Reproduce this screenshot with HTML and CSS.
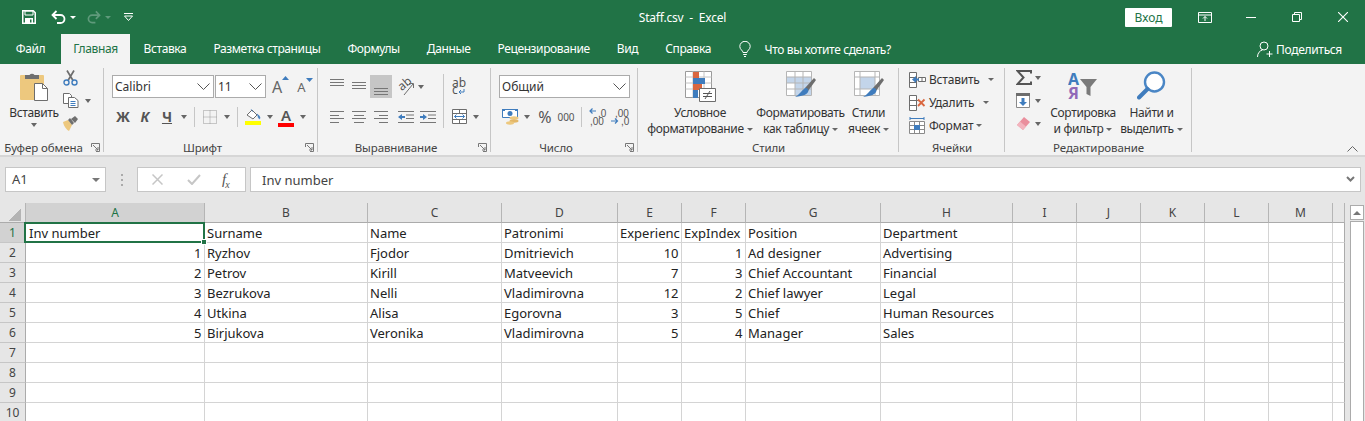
FILE: index.html
```html
<!DOCTYPE html>
<html lang="ru">
<head>
    <meta charset="UTF-8">
    <meta name="viewport" content="width=device-width, initial-scale=1.0">
    <title>Staff.csv - Excel</title>
    <link rel="stylesheet" href="styles.css">
</head>
<body>
    <header class="titlebar">
        <div class="quick">
            <svg class="q-save" width="14" height="14" viewBox="0 0 14 14"><path d="M.75.75h10.5l2 2v10.5H.75z" fill="none" stroke="#fff" stroke-width="1.5"/><path d="M3 1h8v4H3z" fill="none" stroke="#fff"/><path d="M3 8h8v6H3z" fill="#fff"/><path d="M8 9.500h1.500v3H8z" fill="#217346"/></svg>
            <svg class="q-undo" width="15" height="14" viewBox="0 0 15 14"><path d="M5.500 1L1.500 5l4 4M1.500 5H9.500a3.900 3.900 0 0 1 0 8H6" fill="none" stroke="#fff" stroke-width="1.800"/></svg>
            <span class="q-arrow"></span>
            <svg class="q-redo" width="14" height="14" viewBox="0 0 15 14"><path d="M9.500 1l4 4-4 4M13.500 5H5.500a3.900 3.900 0 0 0 0 8H9" fill="none" stroke="#5f9a7b" stroke-width="1.800"/></svg>
            <span class="q-arrow dim"></span>
            <svg class="q-custom" width="9" height="8" viewBox="0 0 9 8"><path d="M0 .5h9" stroke="#fff"/><path d="M.5 3h8L4.500 7.500z" fill="none" stroke="#fff"/></svg>
        </div>
        <div class="doc-title">Staff.csv &nbsp;-&nbsp; Excel</div>
        <div class="win">
            <button class="login">Вход</button>
            <span class="win-btn"><svg width="14" height="11" viewBox="0 0 14 11"><path d="M.5.500h13v10H.5zM.5 3h13" fill="none" stroke="#fff"/><path d="M7 9V4.500M5 6.500l2-2 2 2" fill="none" stroke="#fff"/></svg></span>
            <span class="win-btn"><svg width="10" height="1" viewBox="0 0 10 1"><path d="M0 .5h10" stroke="#fff"/></svg></span>
            <span class="win-btn"><svg width="10" height="10" viewBox="0 0 10 10"><path d="M.5 2.500h7v7h-7zM2.500 2.500v-2h7v7h-2" fill="none" stroke="#fff"/></svg></span>
            <span class="win-btn"><svg width="10" height="10" viewBox="0 0 10 10"><path d="M0 0l10 10M10 0L0 10" stroke="#fff" stroke-width="1.100"/></svg></span>
        </div>
    </header>

    <nav class="tabs">
        <span class="tab file">Файл</span>
        <span class="tab active">Главная</span>
        <span class="tab">Вставка</span>
        <span class="tab">Разметка страницы</span>
        <span class="tab">Формулы</span>
        <span class="tab">Данные</span>
        <span class="tab">Рецензирование</span>
        <span class="tab">Вид</span>
        <span class="tab">Справка</span>
        <span class="tell">
            <svg width="12" height="16" viewBox="0 0 12 16"><path d="M4 11.500C4 9.500 .8 8.500.8 5.500a5.200 5.200 0 0 1 10.400 0C11.200 8.500 8 9.500 8 11.500zM4.200 13.500h3.600M5 15.500h2" fill="none" stroke="#fff"/></svg>
            Что вы хотите сделать?
        </span>
        <span class="share">
            <svg width="16" height="17" viewBox="0 0 16 17"><circle cx="7" cy="5" r="4" fill="none" stroke="#fff"/><path d="M.5 16c0-4 2.500-6.500 5-7M12.500 10v6M9.500 13h6" fill="none" stroke="#fff"/></svg>
            Поделиться
        </span>
    </nav>

    <section class="ribbon">
        <div class="group g-clip">
            <div class="body">
                <div class="big b-paste">
                    <div class="big-icon">
                        <svg width="28" height="30" viewBox="0 0 28 30"><rect y="4" width="24" height="25" rx="1" fill="#edc87e"/><path d="M5 8V4h4.500a3 3 0 0 1 5 0H19v4z" fill="#6f6f6f"/><path d="M14.500 12.500h8l5 5v12h-13z" fill="#fff" stroke="#6d6d6d"/><path d="M22.500 12.500v5h5" fill="none" stroke="#6d6d6d"/></svg>
                    </div>
                    <span>Вставить</span>
                    <span class="arrow"></span>
                </div>
                <div class="stack up">
                    <div class="row-s">
                        <svg width="15" height="16" viewBox="0 0 15 16"><path d="M4 .500l6 10M11 .500l-6 10" stroke="#6d6d6d" stroke-width="1.700"/><circle cx="3.500" cy="12.500" r="2.500" fill="none" stroke="#3f7cbd" stroke-width="1.400"/><circle cx="11.500" cy="12.500" r="2.500" fill="none" stroke="#3f7cbd" stroke-width="1.400"/></svg>
                    </div>
                    <div class="row-s">
                        <svg width="16" height="15" viewBox="0 0 16 15"><path d="M.5.500h6l2 2v8h-8z" fill="#fff" stroke="#6d6d6d"/><path d="M5.500 4.500h6l3.500 3v7H5.500z" fill="#fff" stroke="#6d6d6d"/><path d="M7.500 8.500h5M7.500 10.500h5M7.500 12.500h5" stroke="#3f7cbd"/></svg>
                        <span class="arrow a-copy"></span>
                    </div>
                    <div class="row-s">
                        <svg width="16" height="15" viewBox="0 0 16 15"><path d="M0 6l5-2 4 5-3 6C4 14 1 11 0 6z" fill="#edc87e"/><path d="M5 4l4 5 2-2-4-5zM8 3l4-3 3 3-3 4z" fill="#6f6f6f"/></svg>
                    </div>
                </div>
            </div>
            <div class="label">Буфер обмена</div>
            <svg class="launcher" width="9" height="9" viewBox="0 0 9 9"><path d="M.5 4V.5h8V8.500H5M2 2l5 5M7 4v3H4" fill="none" stroke="#777"/></svg>
        </div>

        <div class="group g-font">
            <div class="body rows">
                <div class="row">
                    <div class="select s-font">Calibri<svg width="13" height="7" viewBox="0 0 13 7"><path d="M.5.500l6 6 6-6" fill="none" stroke="#555"/></svg></div>
                    <div class="select s-size">11<svg width="13" height="7" viewBox="0 0 13 7"><path d="M.5.500l6 6 6-6" fill="none" stroke="#555"/></svg></div>
                    <span class="grow">A<svg width="7" height="4" viewBox="0 0 7 4"><path d="M0 4l3.500-4L7 4z" fill="#3f7cbd"/></svg></span>
                    <span class="grow small">A<svg width="7" height="4" viewBox="0 0 7 4"><path d="M0 0l3.500 4L7 0z" fill="#3f7cbd"/></svg></span>
                </div>
                <div class="row">
                    <span class="tool t-b">Ж</span>
                    <span class="tool t-i">К</span>
                    <span class="tool t-u">Ч</span>
                    <span class="arrow"></span>
                    <span class="sep"></span>
                    <span class="tool"><svg width="14" height="14" viewBox="0 0 14 14"><path d="M.5.500h13v13H.5zM7 .5v13M.5 7h13" fill="none" stroke="#999" stroke-dasharray="1 1"/></svg></span>
                    <span class="arrow"></span>
                    <span class="sep"></span>
                    <span class="tool"><svg width="16" height="17" viewBox="0 0 16 17"><path d="M2 7l5-5 5 5-4 4z" fill="#fff" stroke="#6d6d6d"/><path d="M6 1l2 3M12 6c2 1 3 3 3 4s-1 1-1.500 0-.5-3-1.500-4z" fill="#3f7cbd" stroke="#3f7cbd" stroke-width=".6"/><rect y="13" width="16" height="4" fill="#ffff00"/></svg></span>
                    <span class="arrow"></span>
                    <span class="tool t-color">A</span>
                    <span class="arrow"></span>
                </div>
            </div>
            <div class="label">Шрифт</div>
            <svg class="launcher" width="9" height="9" viewBox="0 0 9 9"><path d="M.5 4V.5h8V8.500H5M2 2l5 5M7 4v3H4" fill="none" stroke="#777"/></svg>
        </div>

        <div class="group g-align">
            <div class="body align-body">
                <div class="rows align-left">
                    <div class="row">
                        <span class="tool"><svg width="14" height="23" viewBox="0 0 14 23"><path d="M0 4.500h14M0 7.500h14M0 10.500h14" stroke="#767676"/></svg></span>
                        <span class="tool"><svg width="14" height="23" viewBox="0 0 14 23"><path d="M0 7.500h14M0 10.500h14M0 13.500h14" stroke="#767676"/></svg></span>
                        <span class="tool on"><svg width="14" height="23" viewBox="0 0 14 23"><path d="M0 13.500h14M0 16.500h14M0 19.500h14" stroke="#767676"/></svg></span>
                        <span class="tool t-orient"><svg class="wide" width="25" height="25" viewBox="-2 -2 25 25"><text x="2" y="13" transform="rotate(-40 7 9)" class="svg-t">ab</text><path d="M8 19L17 8M13 7.500h4.500V12" fill="none" stroke="#6d6d6d"/></svg></span>
                        <span class="arrow a-tight"></span>
                    </div>
                    <div class="row">
                        <span class="tool"><svg width="14" height="14" viewBox="0 0 14 14"><path d="M0 1.500h14M0 5.500h9M0 8.500h14M0 12.500h9" stroke="#767676"/></svg></span>
                        <span class="tool"><svg width="14" height="14" viewBox="0 0 14 14"><path d="M0 1.500h14M2 5.500h10M0 8.500h14M2 12.500h10" stroke="#767676"/></svg></span>
                        <span class="tool"><svg width="14" height="14" viewBox="0 0 14 14"><path d="M0 1.500h14M5 5.500h9M0 8.500h14M5 12.500h9" stroke="#767676"/></svg></span>
                        <span class="tool t-orient"><svg width="16" height="14" viewBox="0 0 16 14"><path d="M0 1.500h16M8 5h8M8 8.500h8M0 12.500h16" stroke="#767676"/><path d="M0 7l4-3v2h3v2H4v2z" fill="#3f7cbd"/></svg></span>
                        <span class="tool"><svg width="16" height="14" viewBox="0 0 16 14"><path d="M0 1.500h16M8 5h8M8 8.500h8M0 12.500h16" stroke="#767676"/><path d="M7 7L3 4v2H0v2h3v2z" fill="#3f7cbd"/></svg></span>
                    </div>
                </div>
                <span class="sep tall"></span>
                <div class="rows">
                    <div class="row">
                        <span class="tool"><svg width="20" height="23" viewBox="0 0 20 23"><text x="3" y="12" class="svg-t">ab</text><text x="3" y="19" class="svg-t">c</text><path d="M15 14v3h-5M12 15l-2 2 2 2" fill="none" stroke="#3f7cbd"/></svg></span>
                    </div>
                    <div class="row">
                        <span class="tool"><svg width="15" height="15" viewBox="0 0 15 15"><path d="M.5.500h14v14H.5zM.5 4.500h14M.5 10.500h14M7.500.5v4M7.500 10.500v4" fill="#fff" stroke="#6d6d6d"/><path d="M2.500 7.500h10M4.500 5.500l-2 2 2 2M10.500 5.500l2 2-2 2" fill="none" stroke="#3f7cbd"/></svg></span>
                        <span class="arrow"></span>
                    </div>
                </div>
            </div>
            <div class="label l-shift">Выравнивание</div>
            <svg class="launcher" width="9" height="9" viewBox="0 0 9 9"><path d="M.5 4V.5h8V8.500H5M2 2l5 5M7 4v3H4" fill="none" stroke="#777"/></svg>
        </div>

        <div class="group g-num">
            <div class="body rows">
                <div class="row">
                    <div class="select s-num">Общий<svg width="13" height="7" viewBox="0 0 13 7"><path d="M.5.500l6 6 6-6" fill="none" stroke="#555"/></svg></div>
                </div>
                <div class="row">
                    <span class="tool"><svg width="17" height="17" viewBox="0 0 17 17"><path d="M.5 1.500h15v8H.5z" fill="#fff" stroke="#3f7cbd"/><circle cx="8" cy="5.500" r="2.500" fill="#3f7cbd"/><path d="M0 1h3v2H0zM13 1h3v2h-3z" fill="#3f7cbd"/><ellipse cx="12" cy="10" rx="4.500" ry="1.700" fill="#edc87e"/><ellipse cx="12" cy="13" rx="4.500" ry="1.700" fill="#e3b768"/><ellipse cx="8" cy="15" rx="4" ry="1.700" fill="#edc87e"/></svg></span>
                    <span class="arrow"></span>
                    <span class="tool t-pct">%</span>
                    <span class="tool narrow t-000">000</span>
                    <span class="sep"></span>
                    <span class="tool"><svg width="21" height="22" viewBox="0 0 21 22"><text x="11" y="10.500" class="svg-n">,0</text><text x="3" y="19" class="svg-n">,00</text><path d="M9 5H3M5.500 2.500L3 5l2.500 2.500" fill="none" stroke="#3f7cbd" stroke-width="1.200"/></svg></span>
                    <span class="tool"><svg width="21" height="22" viewBox="0 0 21 22"><text x="6" y="10.500" class="svg-n">,00</text><text x="12" y="19" class="svg-n">,0</text><path d="M2 15h6.500M6 12.500L8.500 15 6 17.500" fill="none" stroke="#3f7cbd" stroke-width="1.200"/></svg></span>
                </div>
            </div>
            <div class="label l-shift">Число</div>
            <svg class="launcher" width="9" height="9" viewBox="0 0 9 9"><path d="M.5 4V.5h8V8.500H5M2 2l5 5M7 4v3H4" fill="none" stroke="#777"/></svg>
        </div>

        <div class="group g-styles">
            <div class="body">
                <div class="big b-cf">
                    <div class="big-icon">
                        <svg width="31" height="31" viewBox="0 0 31 31"><path d="M.5.500h26v26H.5z" fill="#fff" stroke="#9a9a9a"/><path d="M.5 6h26M.5 12h26M.5 18h26M8 .5v26M19 .5v26" stroke="#c4c4c4"/><path d="M8 1h6v6H8z" fill="#d9663f"/><path d="M8 7h12v6H8z" fill="#3f7cbd"/><path d="M8 13h9v6H8z" fill="#d9663f"/><path d="M8 19h5v8H8z" fill="#3f7cbd"/><path d="M14.500 17.500h16v13h-16z" fill="#fff" stroke="#6d6d6d"/><path d="M18 22.500h9M18 25.500h9M25 20l-5 8" fill="none" stroke="#555"/></svg>
                    </div>
                    <span>Условное</span>
                    <span>форматирование<i class="caret"></i></span>
                </div>
                <div class="big b-table">
                    <div class="big-icon">
                        <svg width="30" height="30" viewBox="0 0 30 30"><path d="M.5.500h25v24H.5z" fill="#fff" stroke="#b5b5b5"/><path d="M1 6h24V24H9V12H1z" fill="#c3d5ea"/><path d="M.5 6h25M.5 12h25M.5 18h25M9 .5v24M17 .5v24" stroke="#b5b5b5"/><path d="M19 17L28 7l2 2-8 11z" fill="#6d6d6d"/><path d="M19 17c3 0 4 2 3 4s-4 4-13 5c4-2 6-6 10-9z" fill="#3f7cbd"/></svg>
                    </div>
                    <span>Форматировать</span>
                    <span>как таблицу<i class="caret"></i></span>
                </div>
                <div class="big b-cell">
                    <div class="big-icon">
                        <svg width="30" height="30" viewBox="0 0 30 30"><path d="M.5.500h25v24H.5z" fill="#fff" stroke="#b5b5b5"/><path d="M6 6h15v12H6z" fill="#c3d5ea"/><path d="M.5 6h25M.5 18h25M6 .5v24M21 .5v24" stroke="#b5b5b5"/><path d="M19 17L28 7l2 2-8 11z" fill="#6d6d6d"/><path d="M19 17c3 0 4 2 3 4s-4 4-13 5c4-2 6-6 10-9z" fill="#3f7cbd"/></svg>
                    </div>
                    <span>Стили</span>
                    <span>ячеек<i class="caret"></i></span>
                </div>
            </div>
            <div class="label">Стили</div>
        </div>

        <div class="group g-cells">
            <div class="body stack">
                <div class="row-s">
                    <svg class="c-icon" width="17" height="16" viewBox="0 0 17 16"><path d="M.5.500h7v15h-7zM.5 5.500h7M.5 10.500h7" fill="#fff" stroke="#6d6d6d"/><path d="M9.500 5.500h7v4h-7zM13 5.500v4" fill="#fff" stroke="#6d6d6d"/><path d="M3 7.500L7 4v2.500h3v2H7V11z" fill="#3f7cbd"/></svg>
                    <span>Вставить</span><i class="caret c1"></i>
                </div>
                <div class="row-s">
                    <svg class="c-icon" width="17" height="16" viewBox="0 0 17 16"><path d="M.5.500h7v15h-7zM.5 5.500h7M.5 10.500h7M7.500 5.500h3" fill="#fff" stroke="#6d6d6d"/><path d="M9 4.500l6.500 6.500M15.500 4.500L9 11" stroke="#d9663f" stroke-width="1.800"/></svg>
                    <span>Удалить</span><i class="caret c2"></i>
                </div>
                <div class="row-s">
                    <svg class="c-icon" width="17" height="17" viewBox="0 0 17 17"><path d="M.5 4.500h15v12H.5zM.5 8.500h15M.5 12.500h15M5.500 4.500v12M10.500 4.500v12" fill="#fff" stroke="#8a8a8a"/><path d="M5 8h6v5H5z" fill="#3f7cbd"/><path d="M1 1.500h14M1 0v3M15 0v3" stroke="#3f7cbd"/></svg>
                    <span>Формат</span><i class="caret c3"></i>
                </div>
            </div>
            <div class="label">Ячейки</div>
        </div>

        <div class="group g-edit">
            <div class="body">
                <div class="stack up e-col">
                    <div class="row-s">
                        <svg width="16" height="15" viewBox="0 0 16 15"><path d="M15 3.500V1H1.500l6 6.500-6 6.500H15v-2.500" fill="none" stroke="#555" stroke-width="2"/></svg>
                        <span class="arrow"></span>
                    </div>
                    <div class="row-s">
                        <svg width="14" height="15" viewBox="0 0 14 15"><path d="M.5.500h13v14H.5z" fill="#fff" stroke="#8a8a8a"/><path d="M0 0h14v3H0z" fill="#6d6d6d"/><path d="M5.500 5h3v4H11l-4 4-4-4h2.500z" fill="#3f7cbd"/></svg>
                        <span class="arrow a-fill"></span>
                    </div>
                    <div class="row-s">
                        <svg width="14" height="13" viewBox="0 0 14 13"><path d="M8 0l6 5-7 8-6-5z" fill="#ea8f9d"/><path d="M1 8l3-3.500 6 5L7 13z" fill="#f3b4be"/></svg>
                        <span class="arrow a-fill"></span>
                    </div>
                </div>
                <div class="big b-sort">
                    <div class="big-icon i-sort">
                        <svg width="30" height="37" viewBox="0 -3 30 37"><text x="0" y="14" class="svg-a">A</text><text x="0" y="28" class="svg-z">Я</text><path d="M12 8h17l-6.500 8v9l-4-2v-7z" fill="#7a7a7a"/></svg>
                    </div>
                    <span>Сортировка</span>
                    <span>и фильтр<i class="caret"></i></span>
                </div>
                <div class="big b-find">
                    <div class="big-icon">
                        <svg width="29" height="29" viewBox="0 0 29 29"><circle cx="17.500" cy="11" r="9.500" fill="#fff" stroke="#4a86c5" stroke-width="2.400"/><path d="M10.500 18L2 26.500" stroke="#3f7cbd" stroke-width="4" stroke-linecap="round"/></svg>
                    </div>
                    <span>Найти и</span>
                    <span>выделить<i class="caret"></i></span>
                </div>
            </div>
            <div class="label">Редактирование</div>
        </div>

        <svg class="collapse" width="11" height="6" viewBox="0 0 11 6"><path d="M.5 5.500l5-5 5 5" fill="none" stroke="#666"/></svg>
    </section>

    <section class="formula">
        <div class="namebox">A1<span class="name-arrow"></span></div>
        <div class="dots"></div>
        <div class="fx-box">
            <svg width="11" height="11" viewBox="0 0 11 11"><path d="M.5.500l10 10M10.500.5l-10 10" stroke="#c6c6c6" stroke-width="1.500"/></svg>
            <svg width="14" height="11" viewBox="0 0 14 11"><path d="M1 6l4 4 8-9" fill="none" stroke="#c6c6c6" stroke-width="2"/></svg>
            <span class="fx">f<sub>x</sub></span>
        </div>
        <div class="input">Inv number
            <svg width="9" height="7" viewBox="0 0 9 7"><path d="M1 1l3.500 3.500L8 1" fill="none" stroke="#777" stroke-width="2"/></svg>
        </div>
    </section>

    <main class="sheet">
        <table class="cells">
            <colgroup>
                <col class="c-head"><col class="c-a"><col class="c-b"><col class="c-c"><col class="c-d"><col class="c-n"><col class="c-n"><col class="c-g"><col class="c-h"><col class="c-n"><col class="c-n"><col class="c-n"><col class="c-n"><col class="c-n"><col class="c-last">
            </colgroup>
            <thead>
                <tr><th class="corner"></th><th class="sel">A</th><th>B</th><th>C</th><th>D</th><th>E</th><th>F</th><th>G</th><th>H</th><th>I</th><th>J</th><th>K</th><th>L</th><th>M</th><th></th></tr>
            </thead>
            <tbody>
                <tr><th class="sel">1</th><td class="current">Inv number<span class="handle"></span></td><td>Surname</td><td>Name</td><td>Patronimi</td><td>Experienc</td><td>ExpIndex</td><td>Position</td><td>Department</td><td></td><td></td><td></td><td></td><td></td><td></td></tr>
                <tr><th>2</th><td class="num">1</td><td>Ryzhov</td><td>Fjodor</td><td>Dmitrievich</td><td class="num">10</td><td class="num">1</td><td>Ad designer</td><td>Advertising</td><td></td><td></td><td></td><td></td><td></td><td></td></tr>
                <tr><th>3</th><td class="num">2</td><td>Petrov</td><td>Kirill</td><td>Matveevich</td><td class="num">7</td><td class="num">3</td><td>Chief Accountant</td><td>Financial</td><td></td><td></td><td></td><td></td><td></td><td></td></tr>
                <tr><th>4</th><td class="num">3</td><td>Bezrukova</td><td>Nelli</td><td>Vladimirovna</td><td class="num">12</td><td class="num">2</td><td>Chief lawyer</td><td>Legal</td><td></td><td></td><td></td><td></td><td></td><td></td></tr>
                <tr><th>5</th><td class="num">4</td><td>Utkina</td><td>Alisa</td><td>Egorovna</td><td class="num">3</td><td class="num">5</td><td>Chief</td><td>Human Resources</td><td></td><td></td><td></td><td></td><td></td><td></td></tr>
                <tr><th>6</th><td class="num">5</td><td>Birjukova</td><td>Veronika</td><td>Vladimirovna</td><td class="num">5</td><td class="num">4</td><td>Manager</td><td>Sales</td><td></td><td></td><td></td><td></td><td></td><td></td></tr>
                <tr><th>7</th><td></td><td></td><td></td><td></td><td></td><td></td><td></td><td></td><td></td><td></td><td></td><td></td><td></td><td></td></tr>
                <tr><th>8</th><td></td><td></td><td></td><td></td><td></td><td></td><td></td><td></td><td></td><td></td><td></td><td></td><td></td><td></td></tr>
                <tr><th>9</th><td></td><td></td><td></td><td></td><td></td><td></td><td></td><td></td><td></td><td></td><td></td><td></td><td></td><td></td></tr>
                <tr><th>10</th><td></td><td></td><td></td><td></td><td></td><td></td><td></td><td></td><td></td><td></td><td></td><td></td><td></td><td></td></tr>
            </tbody>
        </table>
        <div class="scroll">
            <div class="scroll-up"></div>
            <div class="scroll-track"></div>
        </div>
    </main>
</body>
</html>
```

FILE: styles.css
```css
* {
    box-sizing: border-box;
}

html, body {
    height: 421px;
    overflow: hidden;
}

body {
    margin: 0;
    font-family: 'Noto Sans', sans-serif;
    font-size: 12px;
    color: #333;
    background: #e6e6e6;
}

/* title bar */
.titlebar {
    display: grid;
    grid-template-columns: 1fr auto 1fr;
    align-items: center;
    height: 34px;
    background: #217346;
    color: #fff;
}

.quick {
    display: flex;
    align-items: center;
    padding-left: 22px;
}

.q-undo {
    margin-left: 15px;
}

.q-arrow {
    width: 0;
    height: 0;
    margin-left: 4px;
    border: 3px solid transparent;
    border-top: 3px solid #fff;
    border-bottom: 0;
}

.q-arrow.dim {
    border-top-color: #5f9a7b;
}

.q-redo {
    margin-left: 11px;
}

.q-custom {
    margin-left: 13px;
}

.doc-title {
    font-size: 12px;
    letter-spacing: -0.2px;
}

.win {
    display: flex;
    justify-content: flex-end;
    align-items: center;
    margin-right: -1px;
}

.login {
    width: 47px;
    height: 19px;
    margin-right: 10px;
    padding: 0;
    border: none;
    border-radius: 1px;
    background: #fff;
    color: #217346;
    font: 12px 'Noto Sans', sans-serif;
}

.win-btn {
    display: flex;
    justify-content: center;
    align-items: center;
    width: 46px;
    height: 30px;
}

/* tabs */
.tabs {
    display: flex;
    height: 30px;
    background: #217346;
    color: #fff;
    letter-spacing: -0.38px;
}

.tab {
    padding: 0 13.5px;
    line-height: 30px;
}

.tab.file {
    width: 61px;
    padding: 0;
    text-align: center;
}

.tab.active {
    width: 69px;
    padding: 0;
    text-align: center;
    background: #f3f3f3;
    color: #217346;
}

.tell {
    display: flex;
    align-items: center;
    gap: 14px;
    margin-left: 14px;
}

.share {
    display: flex;
    align-items: center;
    gap: 3px;
    margin-left: auto;
    padding-right: 23px;
    letter-spacing: -0.3px;
}

/* ribbon */
.ribbon {
    position: relative;
    display: flex;
    height: 91px;
    padding-top: 4px;
    background: #f3f3f3;
}

.group {
    position: relative;
    display: flex;
    flex-direction: column;
}

.group::after {
    content: '';
    position: absolute;
    top: 0;
    right: 0;
    bottom: 3px;
    width: 1px;
    background: #c6c6c6;
}

.body {
    display: flex;
    height: 72px;
}

.label {
    height: 15px;
    line-height: 15px;
    font-size: 11.5px;
    text-align: center;
    color: #444;
    letter-spacing: -0.1px;
}

.label.l-shift,
.g-font .label,
.g-clip .label {
    padding-right: 17px;
}

.launcher {
    position: absolute;
    right: 4px;
    bottom: 3px;
}

.g-clip { width: 104px; }
.g-font { width: 214px; }
.g-align { width: 173px; }
.g-num { width: 147px; }
.g-styles { width: 261px; }
.g-cells { width: 106px; }
.g-edit { width: 187px; }

.big {
    display: flex;
    flex-direction: column;
    align-items: center;
    line-height: 16px;
    white-space: nowrap;
    letter-spacing: -0.35px;
}

.big-icon {
    display: flex;
    justify-content: center;
    align-items: flex-start;
    height: 37px;
    padding-top: 3px;
}

.big-icon.i-sort {
    padding-top: 0;
}

.b-paste {
    width: 58px;
    margin-left: 5px;
}

.b-cf {
    width: 104px;
    margin-left: 10px;
}

.b-table {
    width: 87px;
    margin-left: 5px;
}

.b-cell {
    width: 39px;
    margin-left: 5px;
}

.b-sort {
    width: 66px;
}

.b-find {
    width: 61px;
    margin-left: 5px;
}

.stack {
    display: flex;
    flex-direction: column;
}

.stack.up {
    margin-top: -2px;
}

.row-s {
    display: flex;
    align-items: center;
    height: 23px;
    letter-spacing: -0.2px;
}

.g-cells .stack {
    padding-left: 10px;
}

.c-icon {
    margin-right: 3px;
}

.e-col {
    width: 34px;
    margin-left: 11px;
}

.rows {
    display: flex;
    flex-direction: column;
    gap: 7px;
    padding: 7px 0 0 8px;
}

.row {
    display: flex;
    align-items: center;
    height: 23px;
}

.tool {
    display: flex;
    flex: none;
    justify-content: center;
    align-items: center;
    width: 22px;
    height: 23px;
    color: #555;
}

.tool svg.wide {
    flex: none;
}

.tool.on {
    background: #c6c6c6;
}

.tool.narrow {
    width: 20px;
}

.t-b {
    font-weight: 700;
    font-size: 14px;
}

.t-i {
    font-style: italic;
    font-weight: 700;
    font-size: 14px;
}

.t-u {
    font-weight: 700;
    font-size: 14px;
    text-decoration: underline;
}

.t-color {
    font-size: 15px;
    font-weight: 600;
    line-height: 14px;
    padding-bottom: 3px;
    background: linear-gradient(#ff0000, #ff0000) center 18px / 16px 4px no-repeat;
}

.t-orient {
    margin-left: 3px;
}

.t-pct {
    margin-left: 2px;
    font-size: 16px;
}

.t-000 {
    font-size: 10px;
    letter-spacing: 0;
}

.svg-t {
    font: 12px 'Noto Sans', sans-serif;
    fill: #555;
}

.svg-n {
    font: 10px 'Liberation Sans', sans-serif;
    fill: #555;
}

.svg-a {
    font: 700 16px 'Noto Sans', sans-serif;
    fill: #3f7cbd;
}

.svg-z {
    font: 700 16px 'Noto Sans', sans-serif;
    fill: #9068b8;
}

.arrow {
    display: flex;
    flex: none;
    justify-content: center;
    align-items: center;
    width: 11px;
    height: 8px;
}

.arrow::before {
    content: '';
    border: 3px solid transparent;
    border-top: 4px solid #666;
    border-bottom: 0;
}

.a-copy {
    margin-left: 3px;
}

.a-tight {
    margin-left: -2px;
}

.a-fill {
    margin-left: 2px;
}

.caret {
    display: inline-block;
    margin-left: 3px;
    vertical-align: middle;
    border: 3px solid transparent;
    border-top: 3px solid #666;
    border-bottom: 0;
}

.c1 { margin-left: 8px; }
.c2 { margin-left: 9px; }
.c3 { margin-left: 3px; }

.sep {
    flex: none;
    width: 1px;
    height: 20px;
    margin: 0 4px 0 5px;
    background: #c6c6c6;
}

.select {
    display: flex;
    justify-content: space-between;
    align-items: center;
    height: 23px;
    padding: 0 3px 0 2px;
    border: 1px solid #ababab;
    background: #fff;
    color: #333;
}

.s-font {
    width: 102px;
    margin-right: 1px;
}

.s-size {
    width: 51px;
}

.s-num {
    width: 131px;
}

.grow {
    display: flex;
    align-items: flex-start;
    margin-left: 6px;
    font-size: 16px;
    color: #666;
}

.grow.small {
    margin-left: 8px;
    font-size: 13px;
}

.align-body {
    display: flex;
}

.align-left {
    width: 120px;
}

.sep.tall {
    align-self: flex-start;
    height: 54px;
    margin-top: 6px;
}

.align-body .rows + .sep + .rows {
    padding-left: 0;
}

.collapse {
    position: absolute;
    right: 7px;
    bottom: 3px;
}

/* formula bar */
.formula {
    display: flex;
    align-items: flex-start;
    height: 48px;
    padding: 10px 4px 0 5px;
    border-top: 2px solid #d6d6d6;
    background: #e6e6e6;
}

.namebox {
    position: relative;
    width: 101px;
    height: 25px;
    padding-left: 6px;
    line-height: 23px;
    font-size: 13px;
    border: 1px solid #c6c6c6;
    background: #fff;
    color: #444;
}

.name-arrow {
    position: absolute;
    top: 10px;
    right: 5px;
    border: 4px solid transparent;
    border-top: 4px solid #777;
    border-bottom: 0;
}

.dots {
    width: 2px;
    height: 12px;
    margin: 7px 14px 0 15px;
    background: repeating-linear-gradient(#aaa 0 2px, transparent 2px 5px);
}

.fx-box {
    display: flex;
    align-items: center;
    width: 109px;
    height: 25px;
    padding-left: 14px;
    border: 1px solid #c6c6c6;
    background: #fff;
}

.fx-box svg + svg {
    margin-left: 24px;
}

.fx {
    margin-left: 21px;
    font: italic 15px 'Liberation Serif', serif;
    color: #555;
}

.fx sub {
    margin-left: -1px;
    font-size: 10px;
    line-height: 0;
}

.input {
    display: flex;
    flex: 1;
    justify-content: space-between;
    align-items: center;
    height: 25px;
    margin-left: 4px;
    padding: 0 5px 0 11px;
    font-size: 13px;
    border: 1px solid #c6c6c6;
    background: #fff;
    color: #444;
}

/* sheet */
.sheet {
    display: flex;
    align-items: flex-start;
}

.cells {
    flex: none;
    width: 1344px;
    table-layout: fixed;
    border-collapse: separate;
    border-spacing: 0;
    font-size: 13px;
    color: #222;
    background: #fff;
}

.c-head { width: 26px; }
.c-a { width: 179px; }
.c-b { width: 163px; }
.c-c { width: 134px; }
.c-d { width: 116px; }
.c-n { width: 64px; }
.c-g { width: 135px; }
.c-h { width: 132px; }
.c-last { width: 12px; }

.cells th {
    height: 20px;
    padding: 0;
    font-weight: 400;
    font-size: 12px;
    color: #444;
    background: #e6e6e6;
    border-right: 1px solid #b5b5b5;
    border-bottom: 1px solid #ababab;
}

.cells tbody th {
    border-right-color: #ababab;
    border-bottom-color: #c6c6c6;
}

.cells th.sel {
    background: #d2d2d2;
    color: #217346;
}

.cells td {
    height: 20px;
    padding: 0 2px;
    overflow: hidden;
    white-space: nowrap;
    border-right: 1px solid #d4d4d4;
    border-bottom: 1px solid #d4d4d4;
}

.cells td.num {
    padding-right: 2.5px;
    text-align: right;
}

.cells td:last-child {
    border-right-color: #ababab;
}

.cells .current {
    position: relative;
    overflow: visible;
    padding-left: 3px;
}

.cells .current::after {
    content: '';
    position: absolute;
    inset: -1px -1px -1px -2px;
    border: 2px solid #217346;
}

.handle {
    position: absolute;
    right: -3px;
    bottom: -3px;
    z-index: 1;
    width: 6px;
    height: 6px;
    background: #217346;
    border: 1px solid #fff;
}

.cells th.corner {
    background: linear-gradient(135deg, #e6e6e6 50%, #b4b4b4 50%) 8px 6px / 13px 12px no-repeat #e6e6e6;
}

.scroll {
    width: 14px;
    margin: 2px 0 0 5px;
}

.scroll-up {
    display: flex;
    justify-content: center;
    align-items: center;
    height: 15px;
    border: 1px solid #ababab;
    background: #fff;
}

.scroll-up::before {
    content: '';
    border: 4px solid transparent;
    border-bottom: 4px solid #777;
    border-top: 0;
}

.scroll-track {
    height: 210px;
    margin-top: 1px;
    border: 1px solid #ababab;
    background: #fff;
}
```
